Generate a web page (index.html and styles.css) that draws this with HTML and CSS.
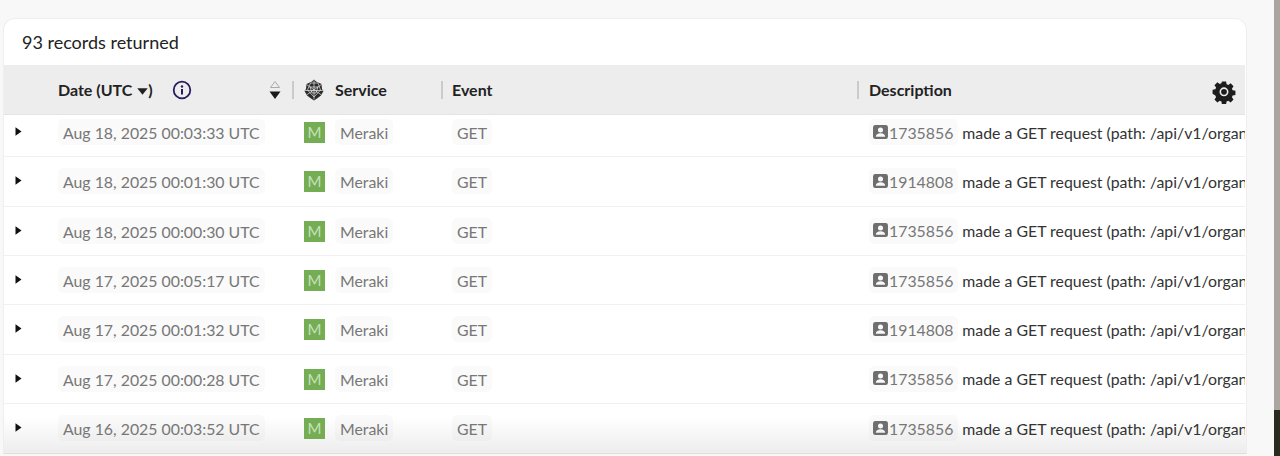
FILE: index.html
```html
<!DOCTYPE html>
<html lang="en">
<head>
  <meta charset="UTF-8">
  <title>Audit Log</title>
  <link rel="stylesheet" href="styles.css">
</head>
<body>

  <div class="card">
    <div class="count">93 records returned</div>

    <div class="head">
      <div class="col-date head-cell">
        <span>Date (UTC <svg class="caret" width="11" height="7" viewBox="0 0 11 7"><path d="M0.3 0.3h10.4L5.5 6.7z"/></svg>)</span>
        <svg class="info" width="20" height="20" viewBox="0 0 20 20"><circle cx="10" cy="10" r="8.3" fill="none" stroke="#2a1a5e" stroke-width="1.8"/><rect x="9" y="9" width="2" height="5.5" fill="#2a1a5e"/><circle cx="10" cy="6.5" r="1.2" fill="#2a1a5e"/></svg>
        <svg class="sort" width="12" height="20" viewBox="0 0 12 20"><path d="M6 1.5L10.5 7.5h-9z" fill="none" stroke="#999" stroke-width="0.8"/><path d="M0.5 11.5h11L6 19z" fill="#1a1a1a"/></svg>
      </div>
      <div class="col-service head-cell divided">
        <svg class="web" width="20" height="22" viewBox="0 0 20 22"><path d="M10 0.5L12 2.5L17.5 5L18 10L19.5 12L17 16.5L13 19.5L10 21.5L7 19.5L3 16.5L0.5 12L2 10L2.5 5L8 2.5z" fill="#2b2b2b"/><path d="M10 1.5V20.5M2.5 5.5L17.5 16M17.5 5.5L2.5 16M1 11.5H19M6.5 4L14 4L16.5 11L10 18L3.5 11zM6 8H14L12 14H8z" fill="none" stroke="#e8e8e8" stroke-width="0.7"/></svg>
        <span>Service</span>
      </div>
      <div class="col-event head-cell divided"><span>Event</span></div>
      <div class="col-desc head-cell divided">
        <span class="desc-label">Description</span>
        <svg class="gear" width="24" height="24" viewBox="0 0 24 24"><path fill-rule="evenodd" fill="#1d1d1d" d="M9.7 0.3h4.6l0.6 3.1 1.8 0.8 2.7-1.8 3.2 3.2-1.8 2.7 0.8 1.8 3.1 0.6v4.6l-3.1 0.6-0.8 1.8 1.8 2.7-3.2 3.2-2.7-1.8-1.8 0.8-0.6 3.1H9.7l-0.6-3.1-1.8-0.8-2.7 1.8-3.2-3.2 1.8-2.7-0.8-1.8L-0.7 14V9.5l3.1-0.6 0.8-1.8-1.8-2.7 3.2-3.2 2.7 1.8 1.8-0.8z M12 6.8a5 5 0 1 0 0 10a5 5 0 1 0 0-10z M12 8.6a3.2 3.2 0 1 1 0 6.4a3.2 3.2 0 1 1 0-6.4z" transform="translate(1.2 1.2) scale(0.9)"/></svg>
      </div>
    </div>

    <div class="rows" id="rows"></div>
    <div class="fade"></div>
  </div>

  <div class="edge"></div>

  <template id="rowTemplate">
    <div class="row">
      <svg class="arrow" width="7" height="9" viewBox="0 0 7 9"><path d="M0.5 0.3L6.5 4.5L0.5 8.7z"/></svg>
      <div class="col-date"><span class="pill date"></span></div>
      <div class="col-service">
        <span class="logo">M</span>
        <span class="pill">Meraki</span>
      </div>
      <div class="col-event"><span class="pill">GET</span></div>
      <div class="col-desc">
        <span class="pill user">
          <svg width="15" height="14" viewBox="0 0 16 15"><path fill-rule="evenodd" fill="#6e6e6e" d="M2.5 0h11A2.5 2.5 0 0 1 16 2.5v10a2.5 2.5 0 0 1-2.5 2.5h-11A2.5 2.5 0 0 1 0 12.5v-10A2.5 2.5 0 0 1 2.5 0z M8 2.6a2.7 2.7 0 1 0 0 5.4a2.7 2.7 0 1 0 0-5.4z M3 12.6h10c0-2.4-2-3.8-5-3.8s-5 1.4-5 3.8z"/></svg><span class="user-id"></span>
        </span>
        <span class="text">made a GET request (path: /api/v1/organizations/inventory/devices)</span>
      </div>
    </div>
  </template>

  <script>
    var records = [
      ['Aug 18, 2025 00:03:33 UTC', '1735856'],
      ['Aug 18, 2025 00:01:30 UTC', '1914808'],
      ['Aug 18, 2025 00:00:30 UTC', '1735856'],
      ['Aug 17, 2025 00:05:17 UTC', '1735856'],
      ['Aug 17, 2025 00:01:32 UTC', '1914808'],
      ['Aug 17, 2025 00:00:28 UTC', '1735856'],
      ['Aug 16, 2025 00:03:52 UTC', '1735856']
    ];

    var container = document.getElementById('rows');
    var template = document.getElementById('rowTemplate');

    records.forEach(function (record) {
      var row = template.content.cloneNode(true);
      row.querySelector('.date').textContent = record[0];
      row.querySelector('.user-id').textContent = record[1];
      container.appendChild(row);
    });
  </script>

</body>
</html>
```

FILE: styles.css
```css
body {
  margin: 0;
  height: 456px;
  overflow: hidden;
  background: #f8f8f8;
  font-family: Lato, "Open Sans", sans-serif;
  color: #222;
  position: relative;
}
.card {
  position: relative;
  margin: 18px 0 0 3px;
  width: 1244px;
  height: 436px;
  padding-right: 1px;
  background: #fff;
  border: 1px solid #eceef0;
  border-bottom: 1px solid #dedede;
  border-radius: 12px 12px 0 0;
  box-sizing: border-box;
  overflow: hidden;
}
.count {
  height: 46px;
  padding-left: 18px;
  line-height: 47px;
  font-size: 18px;
  color: #222;
  box-sizing: border-box;
}
.head {
  display: flex;
  height: 50px;
  background: #ededed;
  border-bottom: 1px solid #e4e4e4;
  box-sizing: border-box;
  font-size: 16px;
  font-weight: 700;
  color: #222;
}
.head-cell {
  display: flex;
  align-items: center;
}
.divided::before {
  content: "";
  width: 2px;
  height: 18px;
  margin-right: 9px;
  background: #c9ccce;
}
.col-date {
  width: 288px;
  padding-left: 54px;
  box-sizing: border-box;
}
.col-service {
  width: 149px;
  box-sizing: border-box;
  display: flex;
  align-items: center;
}
.col-event {
  width: 416px;
  box-sizing: border-box;
}
.col-desc {
  flex: 1;
  min-width: 0;
  display: flex;
  align-items: center;
}
.caret {
  margin: 0 0 1px 1px;
  fill: #222;
}
.info {
  margin-left: 19px;
}
.sort {
  margin-left: 77px;
}
.web {
  margin-right: 11px;
  margin-left: 1px;
}
.desc-label {
  margin-left: 1px;
}
.gear {
  margin-left: auto;
  margin-right: 9px;
  margin-top: 4px;
}
.rows {
  position: relative;
  z-index: 1;
  height: 339px;
  overflow: hidden;
}
.row {
  display: flex;
  align-items: center;
  position: relative;
  height: 49.33px;
  border-bottom: 1px solid #f0f0f0;
  box-sizing: border-box;
  font-size: 15.85px;
}
.row:first-child {
  margin-top: -7px;
}
.arrow {
  position: absolute;
  left: 11px;
  top: 19px;
  fill: #111;
}
.pill {
  display: inline-block;
  padding: 0 5px;
  height: 26px;
  line-height: 27px;
  background: rgba(0, 0, 0, 0.02);
  border-radius: 5px;
  color: #777;
  white-space: nowrap;
}
.row .col-service {
  padding-left: 12px;
}
.row .col-event {
  padding-left: 11px;
}
.row .col-desc {
  padding-left: 12px;
}
.logo {
  width: 21px;
  height: 21px;
  margin: 1px 10px 0 0;
  background: #74ad54;
  color: #c8e0b8;
  font-size: 15px;
  line-height: 21px;
  text-align: center;
  flex-shrink: 0;
}
.user {
  display: flex;
  align-items: center;
  flex-shrink: 0;
}
.user svg {
  margin-left: -1px;
  margin-right: 1px;
  margin-bottom: 1px;
}
.text {
  margin-left: 4px;
  color: #333;
  white-space: nowrap;
  overflow: hidden;
}
.fade {
  position: absolute;
  left: 0;
  right: 0;
  bottom: 0;
  height: 36px;
  background: linear-gradient(rgba(232,232,232,0), rgba(232,232,232,0.8));
}
.edge {
  position: absolute;
  top: 0;
  right: 0;
  bottom: 0;
  width: 6px;
  background: linear-gradient(#aaa59f 90%, #2b2a1e 90%);
}
```
